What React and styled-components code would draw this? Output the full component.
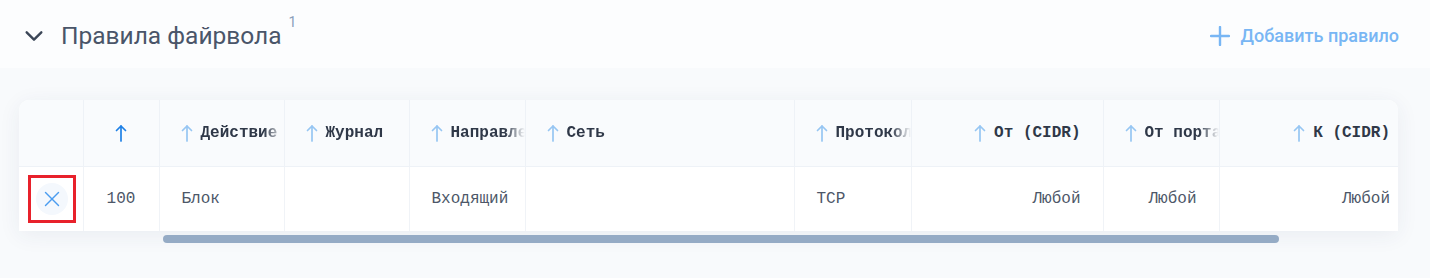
import React from 'react';
import styled, { createGlobalStyle } from 'styled-components';

const GlobalStyle = createGlobalStyle`
  body {
    margin: 0;
    background: #f8fafc;
    font-family: Roboto, "Noto Sans", sans-serif;
  }
`;

const columns = [
  { key: 'del', width: 64, align: 'center' },
  { key: 'priority', title: '', width: 76, align: 'center', active: true },
  { key: 'action', title: 'Действие', width: 125 },
  { key: 'log', title: 'Журнал', width: 125 },
  { key: 'direction', title: 'Направление', width: 116 },
  { key: 'network', title: 'Сеть', width: 269 },
  { key: 'protocol', title: 'Протокол', width: 117 },
  { key: 'fromCidr', title: 'От (CIDR)', width: 192, align: 'right' },
  { key: 'fromPort', title: 'От порта', width: 116, align: 'right', headAlign: 'left' },
  { key: 'toCidr', title: 'К (CIDR)', width: 179, align: 'right', edge: true },
];

const rules = [
  {
    priority: '100',
    action: 'Блок',
    log: '',
    direction: 'Входящий',
    network: '',
    protocol: 'TCP',
    fromCidr: 'Любой',
    fromPort: 'Любой',
    toCidr: 'Любой',
  },
];

const ChevronIcon = () => (
  <svg width="22" height="22" viewBox="0 0 24 24" fill="none" stroke="#3b4657" strokeWidth="2.6" strokeLinecap="round" strokeLinejoin="round">
    <polyline points="4 8 12 16 20 8" />
  </svg>
);

const PlusIcon = () => (
  <svg width="20" height="20" viewBox="0 0 20 20" fill="none" stroke="#78b6f4" strokeWidth="2.4" strokeLinecap="round">
    <line x1="10" y1="1" x2="10" y2="19" />
    <line x1="1" y1="10" x2="19" y2="10" />
  </svg>
);

const CloseIcon = () => (
  <svg width="16" height="16" viewBox="0 0 16 16" fill="none" stroke="#4a9cf0" strokeWidth="1.4" strokeLinecap="round">
    <line x1="1.5" y1="1.5" x2="14.5" y2="14.5" />
    <line x1="14.5" y1="1.5" x2="1.5" y2="14.5" />
  </svg>
);

const SortArrow = ({ active }) => (
  <ArrowBox>
    <svg width="12" height="18" viewBox="0 0 12 18" fill="none" stroke={active ? '#1f80e6' : '#97c6f3'} strokeWidth="1.7" strokeLinecap="round" strokeLinejoin="round">
      <line x1="6" y1="2" x2="6" y2="17" />
      <polyline points="1.5 6.5 6 2 10.5 6.5" />
    </svg>
  </ArrowBox>
);

function App() {
  return (
    <Page>
      <GlobalStyle />
      <SectionHeader>
        <TitleGroup>
          <ChevronIcon />
          <Title>
            Правила файрвола<Count>1</Count>
          </Title>
        </TitleGroup>
        <AddButton>
          <PlusIcon />
          Добавить правило
        </AddButton>
      </SectionHeader>

      <Card>
        <Table>
          <colgroup>
            {columns.map((c) => (
              <col key={c.key} style={{ width: c.width }} />
            ))}
          </colgroup>
          <thead>
            <tr>
              {columns.map((c) => {
                const align = c.headAlign || c.align;
                const fade = !c.edge && (align === 'left' || !align);
                return (
                  <HeadCell key={c.key} $edge={c.edge} $fade={fade}>
                    {c.key !== 'del' && (
                      <HeadInner $align={align} $fade={fade}>
                        <SortArrow active={c.active} />
                        {c.title && <HeadText>{c.title}</HeadText>}
                      </HeadInner>
                    )}
                  </HeadCell>
                );
              })}
            </tr>
          </thead>
          <tbody>
            {rules.map((r) => (
              <tr key={r.priority}>
                {columns.map((c) => (
                  <BodyCell key={c.key} $align={c.align} $edge={c.edge}>
                    {c.key === 'del' ? (
                      <Selected>
                        <DeleteButton>
                          <CloseIcon />
                        </DeleteButton>
                      </Selected>
                    ) : (
                      r[c.key]
                    )}
                  </BodyCell>
                ))}
              </tr>
            ))}
          </tbody>
        </Table>
      </Card>
      <ScrollTrack>
        <ScrollThumb />
      </ScrollTrack>
    </Page>
  );
}

const Page = styled.div`
  width: 1430px;
  height: 278px;
  box-sizing: border-box;
  padding: 0 32px 0 19px;
  background: linear-gradient(#fcfdfe 0, #fcfdfe 68px, #f8fafc 68px);
`;

const SectionHeader = styled.div`
  height: 70px;
  display: flex;
  align-items: center;
  justify-content: space-between;
  padding-left: 4px;
  padding-top: 1px;
  box-sizing: border-box;
`;

const TitleGroup = styled.div`
  display: flex;
  align-items: center;
  gap: 16px;
`;

const Title = styled.h2`
  margin: 0;
  font-family: Roboto, sans-serif;
  font-weight: 400;
  font-size: 24.5px;
  color: #4a5569;
  display: flex;
  align-items: flex-start;
`;

const Count = styled.sup`
  font-size: 14px;
  color: #8b9fba;
  margin-left: 7px;
  line-height: 1;
  position: relative;
  top: -6px;
`;

const AddButton = styled.button`
  border: none;
  background: none;
  padding: 0;
  display: flex;
  align-items: center;
  gap: 11px;
  font-family: Roboto, sans-serif;
  font-weight: 500;
  font-size: 18px;
  color: #78b6f4;
  cursor: pointer;
  margin-right: -1px;
`;

const Card = styled.div`
  margin-top: 30px;
  width: 1379px;
  background: #fff;
  border-radius: 10px 10px 0 0;
  box-shadow: 0 4px 22px rgba(40, 60, 100, 0.07);
  overflow: hidden;
`;

const Table = styled.table`
  width: 100%;
  table-layout: fixed;
  border-collapse: collapse;
  font-family: "Liberation Mono", "DejaVu Sans Mono", monospace;
  font-size: 16px;
`;

const HeadCell = styled.th`
  height: 66px;
  box-sizing: border-box;
  background: #f9fbfd;
  border-right: ${(p) => (p.$edge ? 'none' : '1px solid #eef2f7')};
  border-bottom: 1px solid #eef2f7;
  padding: 0 ${(p) => (p.$edge ? '8px' : p.$fade ? '0' : '22px')} 0 21px;
  font-weight: 700;
  color: #2f3848;
  white-space: nowrap;
  overflow: hidden;
`;

const HeadInner = styled.div`
  display: flex;
  align-items: center;
  gap: 8px;
  justify-content: ${(p) =>
    p.$align === 'right' ? 'flex-end' : p.$align === 'center' ? 'center' : 'flex-start'};
  -webkit-mask-image: ${(p) =>
    p.$fade ? 'linear-gradient(to right, #000 calc(100% - 20px), transparent 100%)' : 'none'};
  mask-image: ${(p) =>
    p.$fade ? 'linear-gradient(to right, #000 calc(100% - 20px), transparent 100%)' : 'none'};
  overflow: hidden;
`;

const ArrowBox = styled.span`
  flex-shrink: 0;
  display: flex;
`;

const HeadText = styled.span`
  flex-shrink: 0;
  white-space: nowrap;
`;

const BodyCell = styled.td`
  height: 65px;
  box-sizing: border-box;
  border-right: ${(p) => (p.$edge ? 'none' : '1px solid #f0f3f7')};
  padding: 0 ${(p) => (p.$edge ? '8px' : '22px')} 0 22px;
  text-align: ${(p) => p.$align || 'left'};
  color: #4d5768;
  white-space: nowrap;
  overflow: hidden;
  &:first-child {
    padding: 0;
  }
`;

const Selected = styled.div`
  width: 48px;
  height: 48px;
  box-sizing: border-box;
  margin: 0 auto 0 9px;
  border: 3px solid #e8212b;
  display: flex;
  align-items: center;
  justify-content: center;
`;

const DeleteButton = styled.button`
  width: 32px;
  height: 32px;
  border-radius: 50%;
  border: none;
  background: #f4f8fd;
  display: flex;
  align-items: center;
  justify-content: center;
  padding: 0;
  cursor: pointer;
`;

const ScrollTrack = styled.div`
  width: 1379px;
  height: 8px;
  margin-top: 4px;
`;

const ScrollThumb = styled.div`
  margin-left: 144px;
  width: 1116px;
  height: 8px;
  border-radius: 4px;
  background: #95abc5;
`;

export default App;
